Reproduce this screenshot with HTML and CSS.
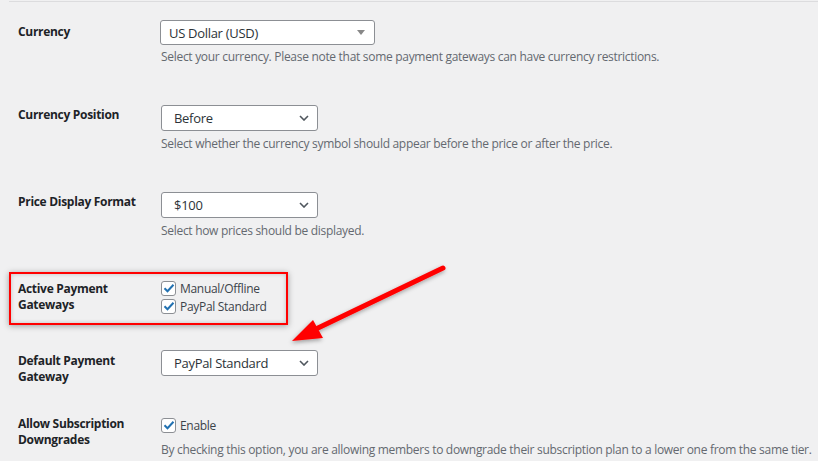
FILE: index.html
```html
<!DOCTYPE html>
<html lang="en">
<head>
<meta charset="utf-8">
<title>Payment settings</title>
<link rel="stylesheet" href="styles.css">
</head>
<body>
<div class="page">
  <div class="settings">
    <div class="row row-1">
      <div class="label">Currency</div>
      <div class="field">
        <div class="select select-wide"><span>US Dollar (USD)</span><span class="tri"></span></div>
        <p class="desc">Select your currency. Please note that some payment gateways can have currency restrictions.</p>
      </div>
    </div>
    <div class="row row-2">
      <div class="label">Currency Position</div>
      <div class="field">
        <div class="select"><span>Before</span><svg class="chev" width="10" height="6" viewBox="0 0 10 6"><path d="M1 1l4 4 4-4" fill="none" stroke="#50575e" stroke-width="1.6"/></svg></div>
        <p class="desc">Select whether the currency symbol should appear before the price or after the price.</p>
      </div>
    </div>
    <div class="row row-3">
      <div class="label">Price Display Format</div>
      <div class="field">
        <div class="select"><span>$100</span><svg class="chev" width="10" height="6" viewBox="0 0 10 6"><path d="M1 1l4 4 4-4" fill="none" stroke="#50575e" stroke-width="1.6"/></svg></div>
        <p class="desc">Select how prices should be displayed.</p>
      </div>
    </div>
    <div class="row row-4">
      <div class="label label-plain">Active Payment<br>Gateways</div>
      <div class="field">
        <label class="check"><span class="box"><svg width="12" height="10" viewBox="0 0 12 10"><path d="M1.5 5.2l3 3 6-6.5" fill="none" stroke="#2271b1" stroke-width="2"/></svg></span>Manual/Offline</label>
        <label class="check"><span class="box"><svg width="12" height="10" viewBox="0 0 12 10"><path d="M1.5 5.2l3 3 6-6.5" fill="none" stroke="#2271b1" stroke-width="2"/></svg></span>PayPal Standard</label>
      </div>
    </div>
    <div class="row row-5">
      <div class="label">Default Payment<br>Gateway</div>
      <div class="field">
        <div class="select"><span>PayPal Standard</span><svg class="chev" width="10" height="6" viewBox="0 0 10 6"><path d="M1 1l4 4 4-4" fill="none" stroke="#50575e" stroke-width="1.6"/></svg></div>
      </div>
    </div>
    <div class="row row-6">
      <div class="label label-plain">Allow Subscription<br>Downgrades</div>
      <div class="field">
        <label class="check"><span class="box"><svg width="12" height="10" viewBox="0 0 12 10"><path d="M1.5 5.2l3 3 6-6.5" fill="none" stroke="#2271b1" stroke-width="2"/></svg></span>Enable</label>
        <p class="desc">By checking this option, you are allowing members to downgrade their subscription plan to a lower one from the same tier.</p>
      </div>
    </div>
  </div>
  <div class="highlight"></div>
  <svg class="arrow" width="818" height="461" viewBox="0 0 818 461">
    <defs>
      <filter id="sh" x="-20%" y="-20%" width="140%" height="140%">
        <feDropShadow dx="-1" dy="2" stdDeviation="2" flood-color="#000" flood-opacity="0.35"/>
      </filter>
    </defs>
    <g filter="url(#sh)">
      <line x1="443" y1="267" x2="318" y2="327" stroke="#f00" stroke-width="5" stroke-linecap="round"/>
      <polygon points="292,340 313,319 323,337" fill="#f00"/>
    </g>
  </svg>
</div>
</body>
</html>
```

FILE: styles.css
```css
* { box-sizing: border-box; }
html, body { margin: 0; padding: 0; }
body {
  background: #f0f0f1;
  font-family: "Open Sans", "Noto Sans", sans-serif;
  font-size: 12px;
  letter-spacing: -0.3px;
  color: #2c3338;
  width: 818px;
  height: 461px;
  overflow: hidden;
}
.page {
  position: relative;
  width: 818px;
  height: 461px;
}
.settings {
  margin-left: 9px;
  margin-top: 1px;
  border-top: 1px solid #dcdcde;
  padding-left: 9px;
  padding-top: 18px;
}
.row {
  display: grid;
  grid-template-columns: 143px 1fr;
}
.row-1 { padding-bottom: 40px; }
.row-2 { padding-bottom: 40px; }
.row-3 { padding-bottom: 42px; }
.row-4 { padding-bottom: 35px; }
.row-5 { padding-bottom: 31px; }
.label {
  font-weight: 700;
  font-size: 12px;
  line-height: 16px;
  color: #1d2327;
  padding-top: 2px;
}
.row-1 .label { padding-top: 4px; }
.row-5 .label { padding-top: 3px; }
.label-plain { padding-top: 0; }
.row-6 .label { padding-top: 0; }
.field { display: flex; flex-direction: column; align-items: flex-start; }
.row-4 .field { margin-top: -2px; }
.select {
  width: 157px;
  height: 26px;
  background: #fff;
  border: 1px solid #8c8f94;
  border-radius: 3px;
  display: flex;
  align-items: center;
  justify-content: space-between;
  padding: 0 8px 0 12px;
  font-size: 13px;
  color: #2c3338;
}
.select-wide {
  width: 215px;
  height: 25px;
  padding-left: 8px;
  padding-right: 9px;
  margin-left: -1px;
}
.tri {
  width: 0;
  height: 0;
  border-left: 4px solid transparent;
  border-right: 4px solid transparent;
  border-top: 5px solid #888;
}
.desc {
  margin: 4px 0 0;
  font-size: 12px;
  line-height: 16px;
  color: #646970;
}
.row-2 .desc, .row-3 .desc { margin-top: 5px; }
.check {
  display: flex;
  align-items: center;
  height: 18px;
  font-size: 12px;
  color: #3c434a;
}
.box {
  width: 15px;
  height: 15px;
  border: 1px solid #8c8f94;
  border-radius: 3px;
  background: #fff;
  display: flex;
  align-items: center;
  justify-content: center;
  margin-right: 4px;
}
.row-6 .desc { margin-top: 8px; }
.highlight {
  position: absolute;
  left: 9px;
  top: 271px;
  width: 279px;
  height: 53px;
  border: 2.5px solid #f00;
  box-shadow: 0 1px 6px rgba(0,0,0,0.35), inset 0 0 4px rgba(0,0,0,0.2);
}
.arrow {
  position: absolute;
  left: 0;
  top: 0;
  pointer-events: none;
}
```
